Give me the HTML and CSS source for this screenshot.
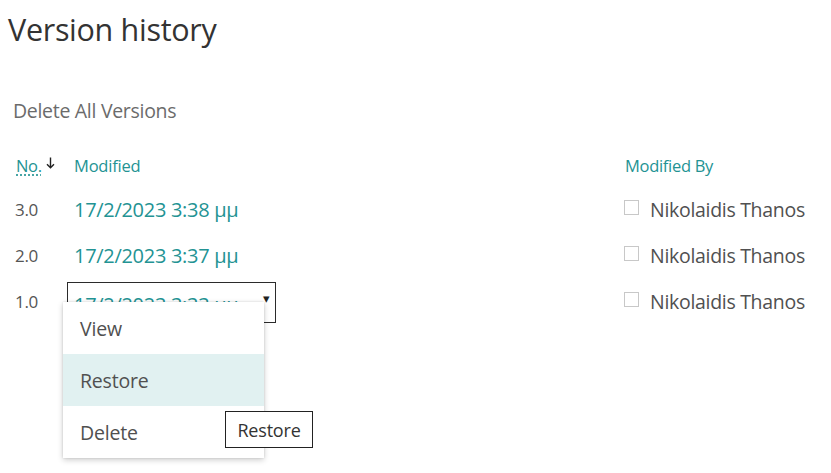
FILE: index.html
```html
<!DOCTYPE html>
<html>
<head>
<meta charset="utf-8">
<link rel="stylesheet" href="styles.css">
</head>
<body>
<div class="page">
  <h1 class="title">Version history</h1>
  <div class="actions">Delete All Versions</div>
  <div class="table">
    <div class="row head">
      <div class="c-no"><span class="no-label">No.</span><svg class="sort" width="9" height="12" viewBox="0 0 9 12"><path d="M4.5 0.5V10.5M1 7.2L4.5 10.8L8 7.2" fill="none" stroke="#222" stroke-width="1.4"/></svg></div>
      <div class="c-mod">Modified</div>
      <div class="c-by">Modified By</div>
    </div>
    <div class="row">
      <div class="c-no">3.0</div>
      <div class="c-mod"><span class="link">17/2/2023 3:38 μμ</span></div>
      <div class="c-by"><span class="chk"></span>Nikolaidis Thanos</div>
    </div>
    <div class="row">
      <div class="c-no">2.0</div>
      <div class="c-mod"><span class="link">17/2/2023 3:37 μμ</span></div>
      <div class="c-by"><span class="chk"></span>Nikolaidis Thanos</div>
    </div>
    <div class="row">
      <div class="c-no">1.0</div>
      <div class="c-mod"><span class="link focus">17/2/2023 3:33 μμ<span class="caret">&#9662;</span></span></div>
      <div class="c-by"><span class="chk"></span>Nikolaidis Thanos</div>
    </div>
  </div>
  <div class="menu">
    <div class="item">View</div>
    <div class="item hover">Restore</div>
    <div class="item">Delete</div>
  </div>
  <div class="tooltip">Restore</div>
</div>
</body>
</html>
```
FILE: styles.css
```css
* { box-sizing: border-box; }
html, body { margin: 0; padding: 0; background: #fff; }
body {
  font-family: "Open Sans", "Noto Sans", sans-serif;
  color: #505050;
  width: 831px;
  height: 473px;
  overflow: hidden;
}
.page { position: relative; padding: 9px 0 0 8px; height: 100%; }
.title {
  margin: 0;
  font-size: 30.5px;
  font-weight: 500;
  color: #333333;
  line-height: 40px;
  letter-spacing: -0.3px;
}
.actions {
  margin: 50px 0 0 5px;
  font-size: 19.5px;
  color: #6b6b6b;
  line-height: 24px;
  letter-spacing: -0.3px;
}
.table { margin-top: 31px; }
.row {
  display: grid;
  grid-template-columns: 59px 551px 1fr;
  align-items: center;
  height: 46px;
  padding-left: 7px;
  font-size: 17px;
}
.row.head { height: 22px; font-size: 16.5px; margin-bottom: 10px; letter-spacing: -0.2px; }
.head .c-no, .head .c-mod, .head .c-by { color: #239393; }
.head .c-no { display: flex; align-items: center; padding-left: 1px; }
.no-label { text-decoration: underline dotted; text-underline-offset: 3px; }
.sort { margin-left: 4px; position: relative; top: -3px; }
.c-no { color: #555; padding-left: 0; letter-spacing: -0.3px; }
.link { color: #239393; font-size: 20px; letter-spacing: -0.3px; }
.focus {
  display: inline-block;
  position: relative;
  top: 4px;
  margin-left: -7px;
  padding: 8px 22px 10px 6px;
  border: 1.5px solid #2b2b2b;
  width: 209px;
  height: 41px;
  white-space: nowrap;
  overflow: hidden;
}
.caret { position: absolute; right: 5px; top: 6px; font-size: 13px; color: #222; }
.c-by { display: flex; align-items: center; color: #505050; font-size: 19.5px; letter-spacing: -0.3px; }
.head .c-by { font-size: 16.5px; padding-left: 0; }
.chk {
  width: 15px; height: 15px;
  border: 1px solid #c8c8c8;
  margin-left: -1px;
  margin-right: 11px;
  background: #fff;
  position: relative;
  top: -2px;
}
.menu {
  position: absolute;
  left: 63px;
  top: 302px;
  width: 201px;
  height: 156px;
  background: #fff;
  box-shadow: 0 2px 6px rgba(0,0,0,0.2), 0 0 2px rgba(0,0,0,0.12);
  display: flex;
  flex-direction: column;
}
.item {
  height: 52px;
  display: flex;
  align-items: center;
  padding-left: 17px;
  font-size: 19.5px;
  color: #505050;
  letter-spacing: -0.2px;
}
.item.hover { background: #e1f1f1; }
.tooltip {
  position: absolute;
  left: 225px;
  top: 411px;
  width: 88px;
  height: 37px;
  border: 1px solid #222;
  background: #fff;
  font-size: 18px;
  color: #333;
  display: flex;
  align-items: center;
  justify-content: center;
  letter-spacing: -0.2px;
}
```
